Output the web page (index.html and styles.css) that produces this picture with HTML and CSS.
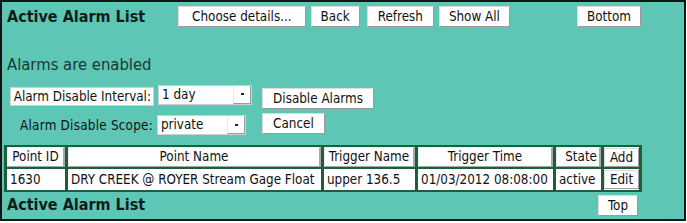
FILE: index.html
```html
<!DOCTYPE html>
<html>
<head>
<meta charset="utf-8">
<link rel="stylesheet" href="styles.css">
</head>
<body>
<div class="frame">
  <div class="topbar">
    <h1 class="title">Active Alarm List</h1>
    <div class="nav">
      <button class="btn btn-choose">Choose details...</button>
      <button class="btn">Back</button>
      <button class="btn btn-refresh">Refresh</button>
      <button class="btn">Show All</button>
    </div>
    <button class="btn btn-bottom">Bottom</button>
  </div>
  <p class="status">Alarms are enabled</p>
  <div class="controls">
    <span class="label label-boxed">Alarm Disable Interval:</span>
    <div class="select sel-interval"><span class="sel-text">1 day</span><span class="sel-arrow"></span></div>
    <button class="btn btn-disable">Disable Alarms</button>
    <span class="label label-plain">Alarm Disable Scope:</span>
    <div class="select sel-scope"><span class="sel-text">private</span><span class="sel-arrow"></span></div>
    <button class="btn btn-cancel">Cancel</button>
  </div>
  <table class="alarms">
    <colgroup>
      <col class="w-id">
      <col class="w-name">
      <col class="w-trig">
      <col class="w-time">
      <col class="w-state">
      <col class="w-act">
    </colgroup>
    <thead>
      <tr>
        <th>Point ID</th>
        <th>Point Name</th>
        <th>Trigger Name</th>
        <th>Trigger Time</th>
        <th class="right">State</th>
        <th class="c-act"><button class="btn cell-btn">Add</button></th>
      </tr>
    </thead>
    <tbody>
      <tr>
        <td>1630</td>
        <td>DRY CREEK @ ROYER Stream Gage Float</td>
        <td>upper 136.5</td>
        <td>01/03/2012 08:08:00</td>
        <td>active</td>
        <td class="c-act"><button class="btn cell-btn">Edit</button></td>
      </tr>
    </tbody>
  </table>
  <div class="footer">
    <h1 class="title">Active Alarm List</h1>
    <button class="btn btn-top">Top</button>
  </div>
</div>
</body>
</html>
```
FILE: styles.css
```css
html, body {
  margin: 0;
  padding: 0;
  background: #ffffff;
}
body {
  font-family: "DejaVu Sans Condensed", "DejaVu Sans", sans-serif;
  font-stretch: condensed;
  color: #0f2620;
}
.frame {
  box-sizing: border-box;
  width: 686px;
  height: 221px;
  background: #5ec6b5;
  border: 2px solid #151515;
  padding: 0 0 0 2px;
  overflow: hidden;
}
.topbar {
  display: flex;
  align-items: flex-start;
  height: 28px;
  padding-top: 4px;
}
.title {
  margin: 0;
  font-size: 16px;
  font-weight: bold;
  line-height: 22px;
  padding-left: 3px;
  color: #0e1d19;
  white-space: nowrap;
}
.nav {
  display: flex;
  gap: 5px;
  margin-left: 32px;
}
.btn {
  font-family: "DejaVu Sans Condensed", "DejaVu Sans", sans-serif;
  font-stretch: condensed;
  font-size: 13.33px;
  color: #111;
  background: #ffffff;
  border: 1px solid #dcdcdc;
  border-right-color: #9a9a9a;
  border-bottom-color: #9a9a9a;
  padding: 0 9px;
  height: 21px;
  line-height: 19px;
  margin: 0;
  border-radius: 0;
  white-space: nowrap;
}
.btn-choose { padding: 0 13px; margin-left: 1px; }
.btn-refresh { margin-left: 2px; padding: 0 10px; }
.btn-bottom { margin-left: 67px; }
.status {
  margin: 0;
  padding: 21px 0 0 3px;
  font-size: 16.5px;
  line-height: 20px;
  color: #163a30;
}
.controls {
  display: grid;
  grid-template-columns: 150px auto auto;
  grid-template-rows: 24px 24px;
  row-gap: 5px;
  column-gap: 3px;
  align-items: center;
  margin-top: 9px;
  width: 372px;
}
.label {
  font-size: 13.33px;
  justify-self: end;
  color: #111;
  white-space: nowrap;
}
.label-plain { letter-spacing: 0.25px; margin-right: 1px; }
.label-boxed {
  background: #fff;
  padding: 0 2px 0 3px;
  line-height: 17px;
  border: 1px solid #cfcfcf;
}
.select {
  display: flex;
  background: #fff;
  border: 1px solid #d0d0d0;
  height: 18px;
  font-size: 13.33px;
  justify-self: start;
}
.sel-interval { width: 92px; margin-top: -3px; margin-left: 1px; }
.sel-scope { width: 87px; }
.sel-text {
  flex: 1;
  padding-left: 3px;
  line-height: 17px;
  color: #111;
}
.sel-arrow {
  width: 16px;
  border-left: 1px solid #e8e8e8;
  border-bottom: 1px solid #9a9a9a;
  border-right: 1px solid #9a9a9a;
  display: flex;
  align-items: center;
  justify-content: center;
}
.sel-arrow::after {
  content: "";
  width: 3px;
  height: 2px;
  background: #222;
}
.btn-disable { justify-self: start; margin-left: 5px; margin-top: 4px; padding: 0 10px; }
.btn-cancel { justify-self: start; margin-left: 5px; margin-top: -4px; padding: 0 10px; }
.alarms {
  margin-top: 8px;
  margin-left: 0;
  border-collapse: separate;
  border-spacing: 3px 2px;
  table-layout: fixed;
  background: #1d5e3d;
  border: 0;
  width: 638px;
  font-size: 13.33px;
}
.w-id { width: 58px; }
.w-name { width: 253px; }
.w-trig { width: 91px; }
.w-time { width: 135px; }
.w-state { width: 45px; }
.w-act { width: 35px; }
.alarms th {
  font-weight: normal;
  background: #fff;
  border: 1px solid #f0f0f0;
  border-right: 2px solid #a8a8a8;
  border-bottom-color: #a8a8a8;
  padding: 0 2px;
  height: 18px;
  line-height: 16px;
  color: #111;
  white-space: nowrap;
}
.alarms th.right { text-align: right; }
.alarms td {
  background: #fff;
  padding: 0 3px;
  height: 21px;
  line-height: 21px;
  color: #111;
  white-space: nowrap;
  overflow: hidden;
}
.alarms th.c-act, .alarms td.c-act {
  padding: 0;
  background: #fff;
  border: none;
  vertical-align: middle;
}
.cell-btn {
  padding: 0 2px;
  height: 19px;
  line-height: 17px;
  width: 100%;
}
.footer {
  display: flex;
  justify-content: space-between;
  align-items: center;
  width: 634px;
  margin-top: 2px;
}
.btn-top { padding: 0 9px; }
```
